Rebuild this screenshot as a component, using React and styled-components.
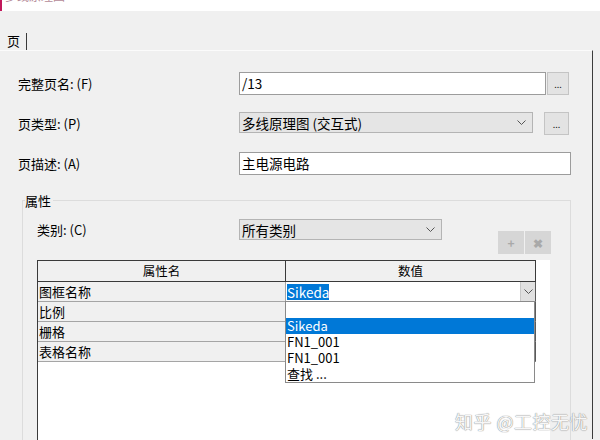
import React from "react";
import styled, { createGlobalStyle } from "styled-components";

const GlobalStyle = createGlobalStyle`
  html, body {
    margin: 0;
    padding: 0;
    background: #f0f0f0;
  }
  body {
    font-family: "Noto Sans CJK SC", "Noto Sans", sans-serif;
    font-size: 13px;
    color: #000;
  }
`;

const Window = styled.div`
  position: relative;
  width: 600px;
  height: 440px;
  overflow: hidden;
  background: #f0f0f0;
`;

const TitleBar = styled.div`
  height: 11px;
  background: #fff;
  overflow: hidden;
  display: flex;
  align-items: flex-start;
  border-left: 2px solid #c2185b;
`;

const TitleText = styled.span`
  margin-top: -11px;
  margin-left: 3px;
  font-size: 12px;
  line-height: 14px;
  color: #b48a98;
`;

const TabStrip = styled.div`
  height: 39px;
  display: flex;
  align-items: flex-end;
  padding-left: 4px;
`;

const Tab = styled.div`
  height: 17px;
  line-height: 15px;
  padding: 0 6px 0 3px;
  border-right: 1px solid #3a3a3a;
  box-sizing: border-box;
`;

const Panel = styled.div`
  width: 593px;
  height: 389px;
  box-sizing: border-box;
  border-top: 1px solid #fbfbfb;
  border-right: 1px solid #3c3c3c;
  padding: 21px 0 0 18px;
`;

const FormGrid = styled.div`
  display: grid;
  grid-template-columns: 221px auto;
  row-gap: 17px;
  align-items: start;
`;

const Label = styled.div`
  line-height: 23px;
`;

const FieldRow = styled.div`
  display: flex;
  align-items: flex-start;
`;

const TextBox = styled.div`
  width: ${(p) => p.$w}px;
  height: 23px;
  box-sizing: border-box;
  background: #fff;
  border: 1px solid #9c9c9c;
  padding-left: 2px;
  line-height: 20px;
  font-size: 13.5px;
`;

const SelectBox = styled.div`
  width: ${(p) => p.$w}px;
  height: ${(p) => p.$h}px;
  box-sizing: border-box;
  background: #e5e5e5;
  border: 1px solid #b4b4b4;
  padding: 0 6px 0 2px;
  display: flex;
  align-items: center;
  justify-content: space-between;
  font-size: 13.5px;
`;

const DotsButton = styled.div`
  width: ${(p) => p.$w}px;
  height: 23px;
  margin-left: ${(p) => p.$gap}px;
  box-sizing: border-box;
  background: #e3e3e3;
  border: 1px solid #c4c4c4;
  font-size: 9px;
  line-height: 24px;
  text-align: center;
  color: #222;
`;

const Group = styled.fieldset`
  margin: 17px 0 0 4px;
  width: 549px;
  box-sizing: border-box;
  border: 1px solid #dcdcdc;
  padding: 0 0 0 2px;
  min-inline-size: 0;
  height: 260px;
`;

const Legend = styled.legend`
  padding: 0 2px 0 0;
  line-height: 17px;
`;

const GroupBody = styled.div`
  padding: 10px 0 0 12px;
`;

const CategoryRow = styled.div`
  display: flex;
  align-items: flex-start;
  height: 35px;
`;

const CategoryLabel = styled.div`
  width: 202px;
  line-height: 21px;
`;

const ToolButtons = styled.div`
  display: flex;
  gap: 1px;
  margin: 12px 0 0 56px;
`;

const ToolButton = styled.div`
  width: 26px;
  height: 23px;
  background: #d6d6d6;
  color: #a9a9a9;
  font-size: 12px;
  line-height: 23px;
  text-align: center;
  font-weight: bold;
`;

const GridBox = styled.div`
  margin-top: 6px;
  width: 513px;
  height: 200px;
  box-sizing: border-box;
  background: #fff;
  border-left: 1px solid #3a3a3a;
`;

const Table = styled.div`
  display: grid;
  grid-template-columns: 248px 250px;
  width: 498px;
`;

const HeaderCell = styled.div`
  height: 22px;
  box-sizing: border-box;
  border-top: 1px solid #3a3a3a;
  border-right: 1px solid #3a3a3a;
  border-bottom: 1px solid #3a3a3a;
  background: #f0f0f0;
  text-align: center;
  line-height: 20px;
  font-size: 12.5px;
`;

const NameCell = styled.div`
  height: 20px;
  box-sizing: border-box;
  border-right: 1px solid #a5a5a5;
  border-bottom: 1px solid #a5a5a5;
  background: #f0f0f0;
  padding-left: 1px;
  line-height: 19px;
  font-size: 13px;
`;

const ValueCell = styled.div`
  position: relative;
  height: 20px;
  box-sizing: border-box;
  border-right: 1px solid #5a5a5a;
  border-bottom: 1px solid #a5a5a5;
  background: #fff;
`;

const Editor = styled.div`
  display: flex;
  align-items: stretch;
  justify-content: space-between;
  height: 19px;
  padding-left: 1px;
`;

const Selected = styled.span`
  align-self: center;
  background: #0078d7;
  color: #fff;
  line-height: 16px;
  font-size: 13.5px;
`;

const ArrowButton = styled.div`
  width: 14px;
  background: #e1e1e1;
  border-left: 1px solid #c8c8c8;
  display: flex;
  align-items: center;
  justify-content: center;
`;

const DropList = styled.div`
  position: absolute;
  top: 19px;
  left: -1px;
  width: 250px;
  box-sizing: border-box;
  background: #fff;
  border: 1px solid #8a8a8a;
  z-index: 2;
`;

const DropItem = styled.div`
  height: 16px;
  line-height: 16px;
  padding-left: 1px;
  font-size: 13px;
  overflow: hidden;
  background: ${(p) => (p.$active ? "#0078d7" : "#fff")};
  color: ${(p) => (p.$active ? "#fff" : "#000")};
`;

const Watermark = styled.div`
  position: absolute;
  right: 12px;
  bottom: 6px;
  font-size: 18px;
  letter-spacing: 0.5px;
  color: #f7f7f7;
  text-shadow: 0 0 1px #909090, 0 0 1px #909090;
`;

function Chevron() {
  return (
    <svg width="9" height="5" viewBox="0 0 9 5">
      <path d="M0.5 0.5 L4.5 4.5 L8.5 0.5" fill="none" stroke="#555" strokeWidth="1" />
    </svg>
  );
}

const rows = ["图框名称", "比例", "栅格", "表格名称"];
const options = ["", "Sikeda", "FN1_001", "FN1_001", "查找 ..."];

export default function App() {
  return (
    <Window>
      <GlobalStyle />
      <TitleBar>
        <TitleText>多线原理图</TitleText>
      </TitleBar>
      <TabStrip>
        <Tab>页</Tab>
      </TabStrip>
      <Panel>
        <FormGrid>
          <Label>完整页名: (F)</Label>
          <FieldRow>
            <TextBox $w={307}>/13</TextBox>
            <DotsButton $w={22} $gap={1}>...</DotsButton>
          </FieldRow>
          <Label>页类型: (P)</Label>
          <FieldRow>
            <SelectBox $w={294} $h={21}>
              <span>多线原理图 (交互式)</span>
              <Chevron />
            </SelectBox>
            <DotsButton $w={25} $gap={11}>...</DotsButton>
          </FieldRow>
          <Label>页描述: (A)</Label>
          <FieldRow>
            <TextBox $w={332}>主电源电路</TextBox>
          </FieldRow>
        </FormGrid>
        <Group>
          <Legend>属性</Legend>
          <GroupBody>
            <CategoryRow>
              <CategoryLabel>类别: (C)</CategoryLabel>
              <SelectBox $w={203} $h={21}>
                <span>所有类别</span>
                <Chevron />
              </SelectBox>
              <ToolButtons>
                <ToolButton>+</ToolButton>
                <ToolButton>✖</ToolButton>
              </ToolButtons>
            </CategoryRow>
            <GridBox>
              <Table>
                <HeaderCell>属性名</HeaderCell>
                <HeaderCell>数值</HeaderCell>
                {rows.map((name, i) => (
                  <React.Fragment key={name}>
                    <NameCell>{name}</NameCell>
                    <ValueCell>
                      {i === 0 && (
                        <>
                          <Editor>
                            <Selected>Sikeda</Selected>
                            <ArrowButton>
                              <Chevron />
                            </ArrowButton>
                          </Editor>
                          <DropList>
                            {options.map((o, j) => (
                              <DropItem key={j} $active={j === 1}>
                                {o}
                              </DropItem>
                            ))}
                          </DropList>
                        </>
                      )}
                    </ValueCell>
                  </React.Fragment>
                ))}
              </Table>
            </GridBox>
          </GroupBody>
        </Group>
      </Panel>
      <Watermark>知乎 @工控无忧</Watermark>
    </Window>
  );
}
